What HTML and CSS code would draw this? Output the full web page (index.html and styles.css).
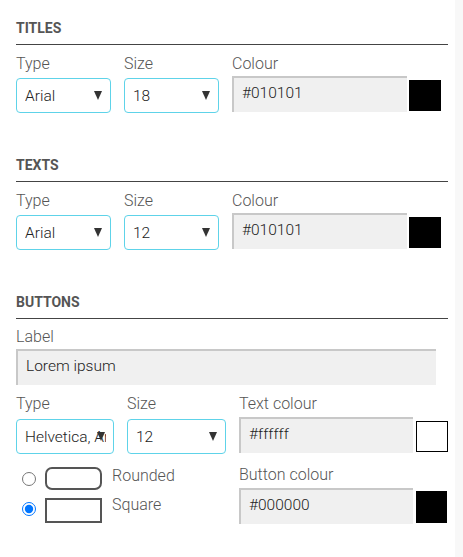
FILE: index.html
```html
<!DOCTYPE html>
<html>

<head>

<meta charset="utf-8">
<title>Style settings</title>

<link rel="stylesheet" href="styles.css">

</head>

<body>

<div class="panel">

   <section class="group">
      <h2 class="group-title">Titles</h2>
      <div class="row">
         <div class="field field-select">
            <label class="field-label">Type</label>
            <div class="select"><span class="select-value">Arial</span><span class="select-arrow"></span></div>
         </div>
         <div class="field field-select">
            <label class="field-label">Size</label>
            <div class="select"><span class="select-value">18</span><span class="select-arrow"></span></div>
         </div>
         <div class="field">
            <label class="field-label">Colour</label>
            <div class="colour-row">
               <div class="text-input colour-input">#010101</div>
               <span class="swatch swatch-black"></span>
            </div>
         </div>
      </div>
   </section>

   <section class="group">
      <h2 class="group-title">Texts</h2>
      <div class="row">
         <div class="field field-select">
            <label class="field-label">Type</label>
            <div class="select"><span class="select-value">Arial</span><span class="select-arrow"></span></div>
         </div>
         <div class="field field-select">
            <label class="field-label">Size</label>
            <div class="select"><span class="select-value">12</span><span class="select-arrow"></span></div>
         </div>
         <div class="field">
            <label class="field-label">Colour</label>
            <div class="colour-row">
               <div class="text-input colour-input">#010101</div>
               <span class="swatch swatch-black"></span>
            </div>
         </div>
      </div>
   </section>

   <section class="group">
      <h2 class="group-title">Buttons</h2>
      <div class="field label-field">
         <label class="field-label">Label</label>
         <div class="text-input label-input">Lorem ipsum</div>
      </div>

      <div class="button-grid">
         <div class="field">
            <label class="field-label">Type</label>
            <div class="select select-wide"><span class="select-value">Helvetica, Arial</span><span class="select-arrow"></span></div>
         </div>
         <div class="field">
            <label class="field-label">Size</label>
            <div class="select select-wide"><span class="select-value">12</span><span class="select-arrow"></span></div>
         </div>
         <div class="field">
            <label class="field-label">Text colour</label>
            <div class="colour-row colour-row-wide">
               <div class="text-input colour-input colour-input-narrow">#ffffff</div>
               <span class="swatch swatch-white"></span>
            </div>
         </div>

         <div class="shape-options">
            <label class="shape-option shape-rounded">
               <input type="radio" name="shape" class="shape-radio">
               <span class="shape-preview preview-rounded"></span>
               <span class="shape-name">Rounded</span>
            </label>
            <label class="shape-option shape-square">
               <input type="radio" name="shape" class="shape-radio" checked>
               <span class="shape-preview preview-square"></span>
               <span class="shape-name">Square</span>
            </label>
         </div>
         <div class="field">
            <label class="field-label">Button colour</label>
            <div class="colour-row colour-row-wide">
               <div class="text-input colour-input colour-input-narrow">#000000</div>
               <span class="swatch swatch-black swatch-small"></span>
            </div>
         </div>
      </div>
   </section>

</div>

</body>

</html>
```

FILE: styles.css
```css
html , body {
   margin:0px;
   padding:0px;
   height:100%;
}

body {
   background:#f8f8f8;
   font-family:Roboto, "Liberation Sans", sans-serif;
}

.panel {
   width:455px;
   min-height:100%;
   box-sizing:border-box;
   padding:20px 7px 0px 16px;
   background:#ffffff;
}

.group {
   margin-bottom:44px;
}

.group-title {
   margin:0px;
   padding-bottom:7px;
   border-bottom:1px solid #444444;
   font-size:14px;
   line-height:17px;
   font-weight:700;
   text-transform:uppercase;
   color:#555555;
}

.row {
   display:flex;
   gap:13px;
   margin-top:10px;
}

.field-select {
   width:95px;
}

.field-label {
   display:block;
   font-size:16px;
   line-height:18px;
   font-weight:300;
   color:#555555;
}

/* fake select: value text with the arrow drawn on top */
.select {
   position:relative;
   display:flex;
   align-items:center;
   height:35px;
   margin-top:5px;
   box-sizing:border-box;
   padding:0px 7px 0px 8px;
   border:1px solid #5ed3e9;
   border-radius:4px;
   overflow:hidden;
}

.select-value {
   font-size:15.5px;
   font-weight:300;
   color:#222222;
   white-space:nowrap;
   overflow:hidden;
}

.select-arrow {
   position:absolute;
   right:8px;
   top:12px;
   width:0px;
   height:0px;
   border-left:4.5px solid transparent;
   border-right:4.5px solid transparent;
   border-top:9px solid #333333;
}

.text-input {
   box-sizing:border-box;
   height:36px;
   margin-top:3px;
   padding:6px 8px 0px 8px;
   background:#f0f0f0;
   border-top:2px solid #c8c8c8;
   border-left:2px solid #c8c8c8;
   font-size:15.5px;
   line-height:18px;
   font-weight:300;
   color:#222222;
}

.colour-row {
   display:flex;
   align-items:center;
   gap:2px;
}

.colour-input {
   width:175px;
}

.swatch {
   display:block;
   width:32px;
   height:31px;
   margin-top:5px;
   box-sizing:border-box;
}

.swatch-black {
   background:#000000;
}

.swatch-white {
   background:#ffffff;
   border:1px solid #000000;
}

.label-field {
   margin-top:9px;
}

.label-input {
   width:420px;
}

/* buttons: selects, colours and shape choice */
.button-grid {
   display:grid;
   grid-template-columns:98px 99px 209px;
   column-gap:13px;
   row-gap:12px;
   margin-top:10px;
}

.select-wide {
   margin-top:6px;
}

.colour-row-wide {
   gap:3px;
   margin-top:1px;
}

.colour-input-narrow {
   width:174px;
}

.swatch-small {
   width:31px;
   height:32px;
}

.shape-options {
   grid-column:1 / 3;
   padding-top:1px;
}

.shape-option {
   display:flex;
   align-items:flex-start;
   color:#555555;
   font-size:16px;
   line-height:18px;
   font-weight:300;
}

.shape-square {
   margin-top:8px;
}

.shape-radio {
   width:14px;
   height:14px;
   margin:5px 0px 0px 6px;
}

.shape-square .shape-radio {
   margin-top:4px;
}

.shape-preview {
   display:block;
   width:57px;
   box-sizing:border-box;
   margin-left:9px;
   border:2px solid #555555;
}

.preview-rounded {
   height:23px;
   border-radius:7px;
}

.preview-square {
   height:25px;
}

.shape-name {
   margin-left:10px;
}

.shape-square .shape-name {
   margin-top:-2px;
}
```
